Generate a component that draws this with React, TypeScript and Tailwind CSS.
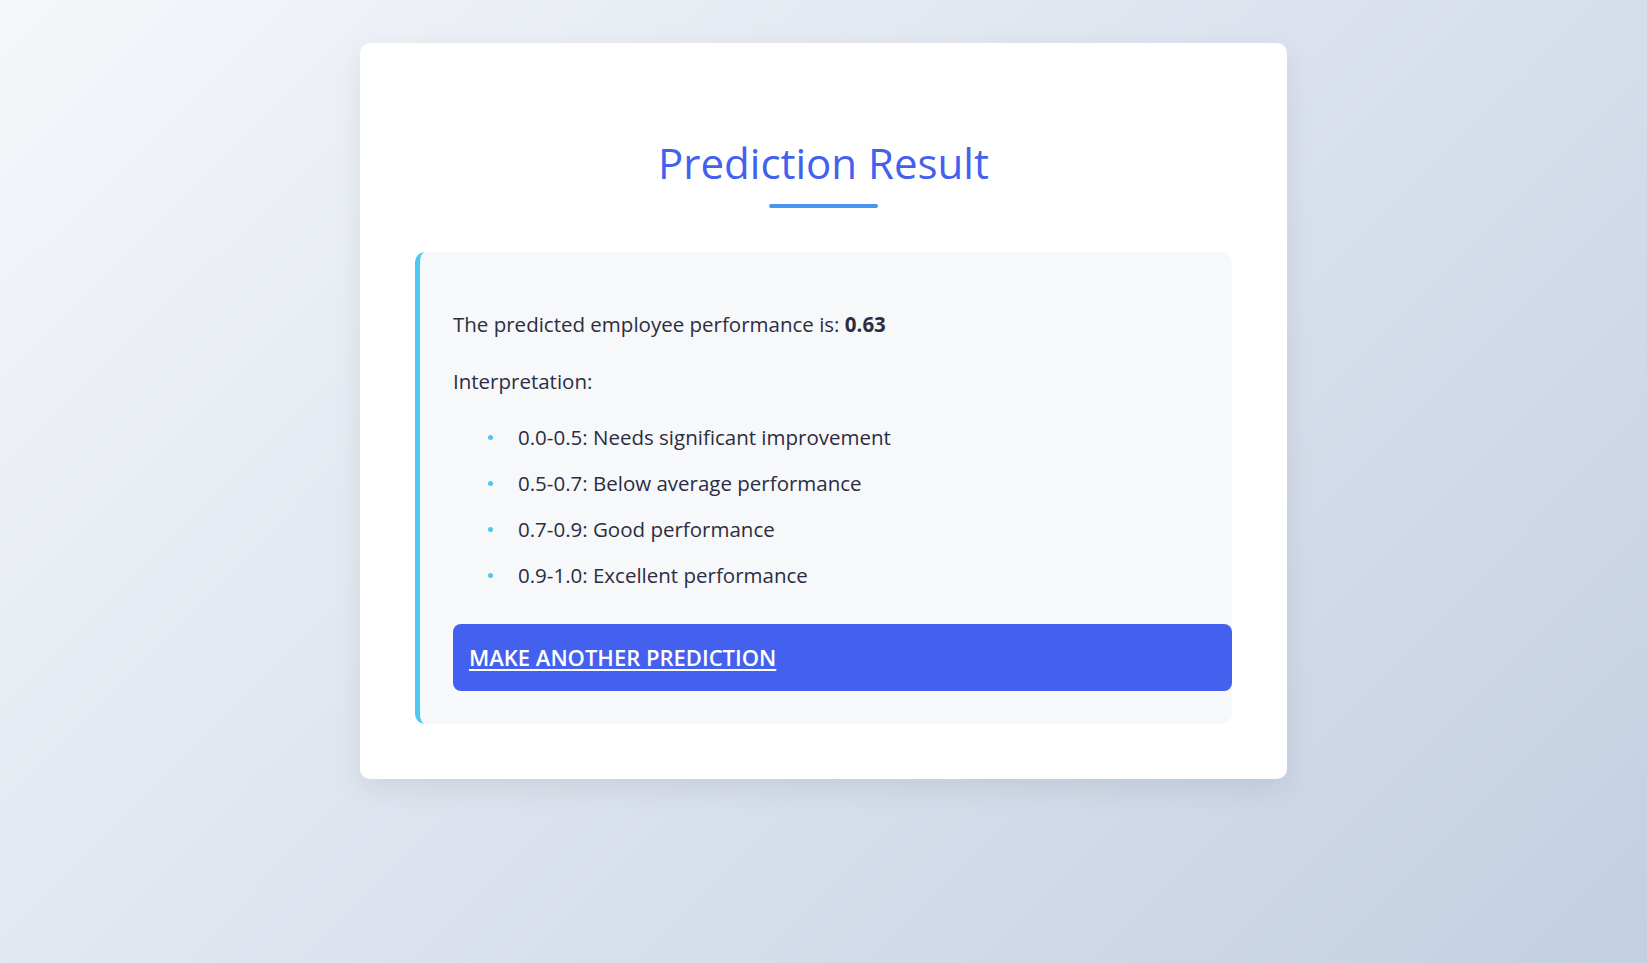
import React from "react";

const ranges = [
  "0.0-0.5: Needs significant improvement",
  "0.5-0.7: Below average performance",
  "0.7-0.9: Good performance",
  "0.9-1.0: Excellent performance",
];

export default function App() {
  return (
    <div
      className="w-full min-h-[963px] bg-[linear-gradient(135deg,#f5f7fa_0%,#c3cfe2_100%)] text-[#2b2d42]"
      style={{ fontFamily: '"Open Sans", "Noto Sans", sans-serif' }}
    >
      <div className="pt-[43px] flex justify-center">
        {/* CARD */}
        <div className="w-[927px] bg-white rounded-[10px] shadow-[0_10px_30px_rgba(0,0,0,0.08)] px-[55px] pt-[92px] pb-[55px]">
          <h1 className="text-center text-[42px] leading-[56px] font-medium text-[#4361ee]">
            Prediction Result
          </h1>
          <div className="mx-auto mt-[13px] w-[109px] h-[4px] rounded-full bg-[#4895ef]" />

          {/* RESULT BOX */}
          <div className="mt-[44px] bg-[#f7f8fa] border-l-[5px] border-[#4cc9f0] rounded-[10px] pl-[33px] pt-[57px] pb-[33px]">
            <p className="text-[20.5px] leading-[30px]">
              The predicted employee performance is: <strong className="font-bold">0.63</strong>
            </p>
            <p className="mt-[27px] text-[20.5px] leading-[30px]">Interpretation:</p>
            <ul className="mt-[26px] flex flex-col gap-[16px]">
              {ranges.map((r) => (
                <li key={r} className="flex items-center text-[20.5px] leading-[30px]">
                  <span className="ml-[35px] w-[5px] h-[5px] rounded-full bg-[#4cc9f0]" />
                  <span className="ml-[25px]">{r}</span>
                </li>
              ))}
            </ul>
            <a
              href="#"
              className="mt-[34px] flex items-center h-[67px] px-[16px] rounded-[8px] bg-[#4361ee] text-white text-[22px] font-semibold uppercase underline underline-offset-[3px]"
            >
              Make Another Prediction
            </a>
          </div>
        </div>
      </div>
    </div>
  );
}
